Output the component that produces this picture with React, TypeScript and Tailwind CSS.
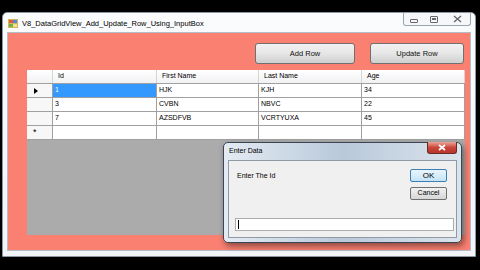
import React from 'react'

const rows = [
  { id: '1', first: 'HJK', last: 'KJH', age: '34' },
  { id: '3', first: 'CVBN', last: 'NBVC', age: '22' },
  { id: '7', first: 'AZSDFVB', last: 'VCRTYUXA', age: '45' },
]

const cols = ['Id', 'First Name', 'Last Name', 'Age']
const widths = ['w-[104px]', 'w-[102px]', 'w-[103px]', 'w-[103px]']

function AppIcon() {
  return (
    <svg width="10" height="9" viewBox="0 0 10 9">
      <rect x="0" y="0" width="10" height="9" fill="#d9b45a" />
      <rect x="1" y="1" width="4" height="3" fill="#e65a3c" />
      <rect x="5" y="1" width="4" height="3" fill="#4c8ed8" />
      <rect x="1" y="5" width="4" height="3" fill="#6bb04a" />
      <rect x="5" y="5" width="4" height="3" fill="#f4e08a" />
    </svg>
  )
}

function WindowControls() {
  return (
    <div className="flex h-[13px] items-center rounded-b-[3px] border border-t-0 border-[#9aa5b2] bg-[#f5f7fa]">
      <div className="flex w-[20px] justify-center">
        <div className="mt-[3px] h-[4px] w-[8px] rounded-[1px] border border-[#666]" />
      </div>
      <div className="flex w-[20px] justify-center">
        <div className="flex h-[7px] w-[8px] items-center justify-center rounded-[1px] border border-[#666]">
          <div className="h-[2px] w-[4px] border border-[#666]" />
        </div>
      </div>
      <div className="flex w-[26px] justify-center">
        <svg width="9" height="8" viewBox="0 0 9 8">
          <path d="M1 1 L8 7 M8 1 L1 7" stroke="#666" strokeWidth="1.4" />
        </svg>
      </div>
    </div>
  )
}

function Btn({ label, w }: { label: string; w: string }) {
  return (
    <div
      className={`${w} flex h-[21px] items-center justify-center rounded-[3px] border border-[#707070] bg-gradient-to-b from-[#f2f2f2] via-[#e6e6e6] to-[#cfcfcf] text-[7.5px] text-[#111]`}
    >
      {label}
    </div>
  )
}

function Grid() {
  return (
    <div className="flex h-[165px] w-[438px] flex-col bg-[#ababab] text-[7px] text-black">
      <div className="flex h-[14px] border-b border-[#a0a0a0] bg-gradient-to-b from-white to-[#f1f2f4]">
        <div className="w-[26px] border-r border-[#d5d5d5]" />
        {cols.map((c, i) => (
          <div key={c} className={`${widths[i]} flex items-center border-r border-[#d5d5d5] pl-[5px]`}>
            {c}
          </div>
        ))}
      </div>
      {rows.map((r, ri) => (
        <div key={r.id} className="flex h-[14px] border-b border-[#a0a0a0] bg-white">
          <div className="flex w-[26px] items-center border-r border-[#a0a0a0] bg-[#f7f7f7] pl-[7px]">
            {ri === 0 && (
              <svg width="4" height="6" viewBox="0 0 4 6">
                <path d="M0 0 L4 3 L0 6 Z" fill="#000" />
              </svg>
            )}
          </div>
          {[r.id, r.first, r.last, r.age].map((v, i) => (
            <div
              key={i}
              className={`${widths[i]} flex items-center border-r border-[#a0a0a0] pl-[2px] ${
                ri === 0 && i === 0 ? 'bg-[#3399ff] text-white' : ''
              }`}
            >
              {v}
            </div>
          ))}
        </div>
      ))}
      <div className="flex h-[14px] border-b border-[#a0a0a0] bg-white">
        <div className="flex w-[26px] items-center border-r border-[#a0a0a0] bg-[#f7f7f7] pl-[6px] text-[9px] leading-none">
          *
        </div>
        {widths.map((w, i) => (
          <div key={i} className={`${w} border-r border-[#a0a0a0]`} />
        ))}
      </div>
    </div>
  )
}

function Dialog() {
  return (
    <div className="absolute left-[223px] top-[142px] flex h-[101px] w-[239px] flex-col rounded-[5px] border border-[#3c4652] bg-gradient-to-r from-[#e4ebf3] via-[#b9c9da] to-[#dbe3ec] px-[4px] pb-[4px] shadow-[2px_3px_6px_rgba(0,0,0,0.45)]">
      <div className="flex h-[17px] items-center justify-between">
        <span className="pl-[1px] text-[7px] text-black">Enter Data</span>
        <div className="-mt-[1px] flex h-[12px] w-[30px] items-center justify-center self-start rounded-b-[3px] border border-t-0 border-[#6b2a22] bg-gradient-to-b from-[#e8a397] via-[#c9453a] to-[#b8362c]">
          <svg width="8" height="7" viewBox="0 0 8 7">
            <path d="M1 1 L7 6 M7 1 L1 6" stroke="#fff" strokeWidth="1.8" />
          </svg>
        </div>
      </div>
      <div className="flex flex-1 flex-col border border-[#8f9aa6] bg-[#f0f0f0] px-[6px] pt-[8px] text-[7px] text-black">
        <div className="flex justify-between">
          <span className="pl-[2px] pt-[2px]">Enter The Id</span>
          <div className="flex flex-col gap-[5px] pr-[3px]">
            <div className="flex h-[13px] w-[37px] items-center justify-center rounded-[2px] border border-[#3c7fb1] bg-gradient-to-b from-[#eaf6fd] to-[#c4e3f6] text-[8px]">
              OK
            </div>
            <div className="flex h-[13px] w-[37px] items-center justify-center rounded-[2px] border border-[#707070] bg-gradient-to-b from-[#f2f2f2] to-[#d6d6d6] text-[7px]">
              Cancel
            </div>
          </div>
        </div>
        <div className="mt-[18px] flex h-[13px] w-[219px] items-center border border-[#abadb3] bg-white pl-[2px]">
          <div className="h-[9px] w-px bg-black" />
        </div>
      </div>
    </div>
  )
}

export default function App() {
  return (
    <div
      className="relative h-[270px] w-[480px] overflow-hidden bg-black pl-[2px] pt-[12px]"
      style={{ fontFamily: '"Liberation Sans", Arial, sans-serif' }}
    >
      <div className="flex h-[245px] w-[474px] flex-col rounded-t-[5px] border border-[#8c97a3] bg-gradient-to-b from-[#fafbfd] to-[#f1f4f8] px-[4px] pb-[5px]">
        <div className="flex h-[19px] items-start justify-between">
          <div className="flex items-center gap-[4px] pl-[1px] pt-[5px]">
            <AppIcon />
            <span className="text-[7.5px] text-black">V8_DataGridView_Add_Update_Row_Using_InputBox</span>
          </div>
          <WindowControls />
        </div>
        <div className="flex flex-1 flex-col border border-[#b4bec9] bg-[#fa8072] pl-[19px]">
          <div className="flex gap-[15px] pl-[228px] pt-[10px]">
            <Btn label="Add Row" w="w-[100px]" />
            <Btn label="Update Row" w="w-[94px]" />
          </div>
          <div className="mt-[6px]">
            <Grid />
          </div>
        </div>
      </div>
      <Dialog />
    </div>
  )
}
